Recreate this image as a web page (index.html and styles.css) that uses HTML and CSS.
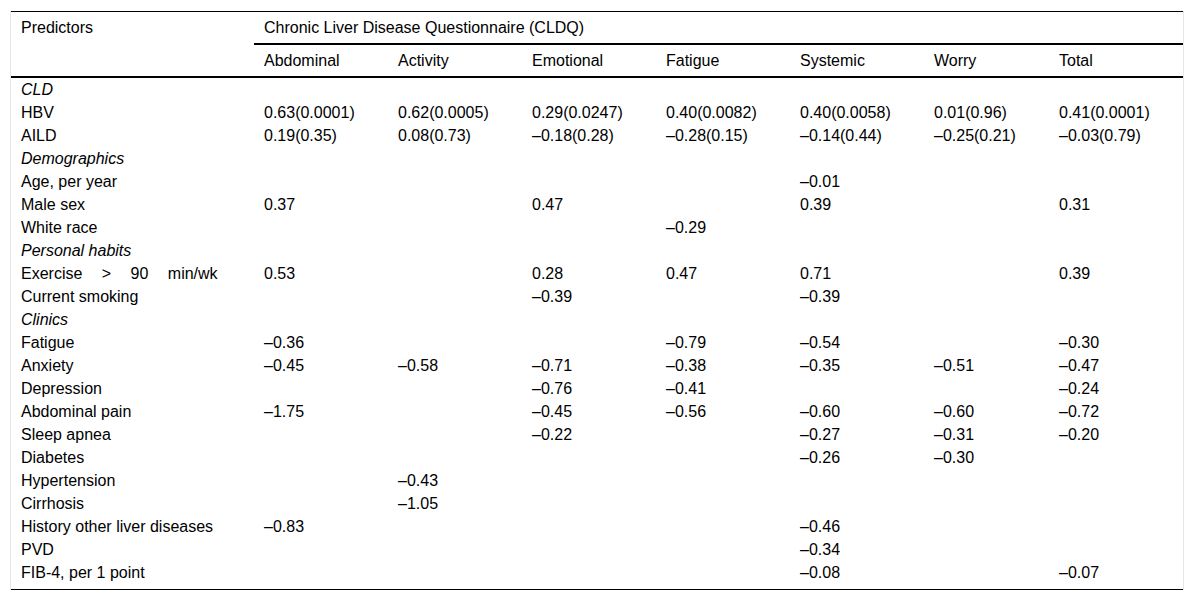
FILE: index.html
```html
<!DOCTYPE html>
<html>
<head>
<meta charset="utf-8">
<link rel="stylesheet" href="styles.css">
</head>
<body>
<div class="wrap">
<table class="tbl">
<colgroup>
<col class="c0"><col class="cd"><col class="cd"><col class="cd"><col class="cd"><col class="cd"><col class="cw"><col class="cd">
</colgroup>
<thead>
<tr class="h1">
<th rowspan="2" class="pred">Predictors</th>
<th colspan="7" class="span">Chronic Liver Disease Questionnaire (CLDQ)</th>
</tr>
<tr class="h2">
<th>Abdominal</th><th>Activity</th><th>Emotional</th><th>Fatigue</th><th>Systemic</th><th>Worry</th><th>Total</th>
</tr>
</thead>
<tbody>
<tr><td class="it">CLD</td><td></td><td></td><td></td><td></td><td></td><td></td><td></td></tr>
<tr><td>HBV</td><td>0.63(0.0001)</td><td>0.62(0.0005)</td><td>0.29(0.0247)</td><td>0.40(0.0082)</td><td>0.40(0.0058)</td><td>0.01(0.96)</td><td>0.41(0.0001)</td></tr>
<tr><td>AILD</td><td>0.19(0.35)</td><td>0.08(0.73)</td><td>–0.18(0.28)</td><td>–0.28(0.15)</td><td>–0.14(0.44)</td><td>–0.25(0.21)</td><td>–0.03(0.79)</td></tr>
<tr><td class="it">Demographics</td><td></td><td></td><td></td><td></td><td></td><td></td><td></td></tr>
<tr><td>Age, per year</td><td></td><td></td><td></td><td></td><td>–0.01</td><td></td><td></td></tr>
<tr><td>Male sex</td><td>0.37</td><td></td><td>0.47</td><td></td><td>0.39</td><td></td><td>0.31</td></tr>
<tr><td>White race</td><td></td><td></td><td></td><td>–0.29</td><td></td><td></td><td></td></tr>
<tr><td class="it">Personal habits</td><td></td><td></td><td></td><td></td><td></td><td></td><td></td></tr>
<tr><td><span class="ws">Exercise &gt; 90 min/wk</span></td><td>0.53</td><td></td><td>0.28</td><td>0.47</td><td>0.71</td><td></td><td>0.39</td></tr>
<tr><td>Current smoking</td><td></td><td></td><td>–0.39</td><td></td><td>–0.39</td><td></td><td></td></tr>
<tr><td class="it">Clinics</td><td></td><td></td><td></td><td></td><td></td><td></td><td></td></tr>
<tr><td>Fatigue</td><td>–0.36</td><td></td><td></td><td>–0.79</td><td>–0.54</td><td></td><td>–0.30</td></tr>
<tr><td>Anxiety</td><td>–0.45</td><td>–0.58</td><td>–0.71</td><td>–0.38</td><td>–0.35</td><td>–0.51</td><td>–0.47</td></tr>
<tr><td>Depression</td><td></td><td></td><td>–0.76</td><td>–0.41</td><td></td><td></td><td>–0.24</td></tr>
<tr><td>Abdominal pain</td><td>–1.75</td><td></td><td>–0.45</td><td>–0.56</td><td>–0.60</td><td>–0.60</td><td>–0.72</td></tr>
<tr><td>Sleep apnea</td><td></td><td></td><td>–0.22</td><td></td><td>–0.27</td><td>–0.31</td><td>–0.20</td></tr>
<tr><td>Diabetes</td><td></td><td></td><td></td><td></td><td>–0.26</td><td>–0.30</td><td></td></tr>
<tr><td>Hypertension</td><td></td><td>–0.43</td><td></td><td></td><td></td><td></td><td></td></tr>
<tr><td>Cirrhosis</td><td></td><td>–1.05</td><td></td><td></td><td></td><td></td><td></td></tr>
<tr><td>History other liver diseases</td><td>–0.83</td><td></td><td></td><td></td><td>–0.46</td><td></td><td></td></tr>
<tr><td>PVD</td><td></td><td></td><td></td><td></td><td>–0.34</td><td></td><td></td></tr>
<tr class="last"><td>FIB-4, per 1 point</td><td></td><td></td><td></td><td></td><td>–0.08</td><td></td><td>–0.07</td></tr>
</tbody>
</table>
</div>
</body>
</html>
```

FILE: styles.css
```css
html, body {
  margin: 0;
  padding: 0;
  background: #fff;
}
body {
  font-family: "Liberation Sans", Arial, sans-serif;
  font-size: 16px;
  color: #000;
}
.wrap {
  margin: 11px 0 0 10px;
  width: 1172px;
  border-left: 1px solid #e6e6e6;
  border-right: 1px solid #e6e6e6;
}
.tbl {
  width: 1172px;
  border-collapse: collapse;
  table-layout: fixed;
}
.c0 { width: 243px; }
.cd { width: 134px; }
.cw { width: 125px; }
.tbl th {
  font-weight: normal;
  text-align: left;
  vertical-align: top;
  padding: 4px 10px;
  line-height: 23px;
  white-space: nowrap;
}
.tbl thead tr.h1 th {
  border-top: 1px solid #000;
}
.tbl th.span {
  border-bottom: 2px solid #000;
}
.tbl tr.h2 th {
  border-bottom: 2px solid #000;
}
.tbl th.pred {
  border-bottom: 2px solid #000;
}
.tbl td {
  padding: 0 10px;
  line-height: 23px;
  height: 23px;
  text-align: left;
  vertical-align: top;
  white-space: nowrap;
}
.tbl td.it {
  font-style: italic;
}
.tbl tr.last td {
  padding-bottom: 5px;
  border-bottom: 1px solid #000;
}
.ws {
  word-spacing: 15px;
}
```
